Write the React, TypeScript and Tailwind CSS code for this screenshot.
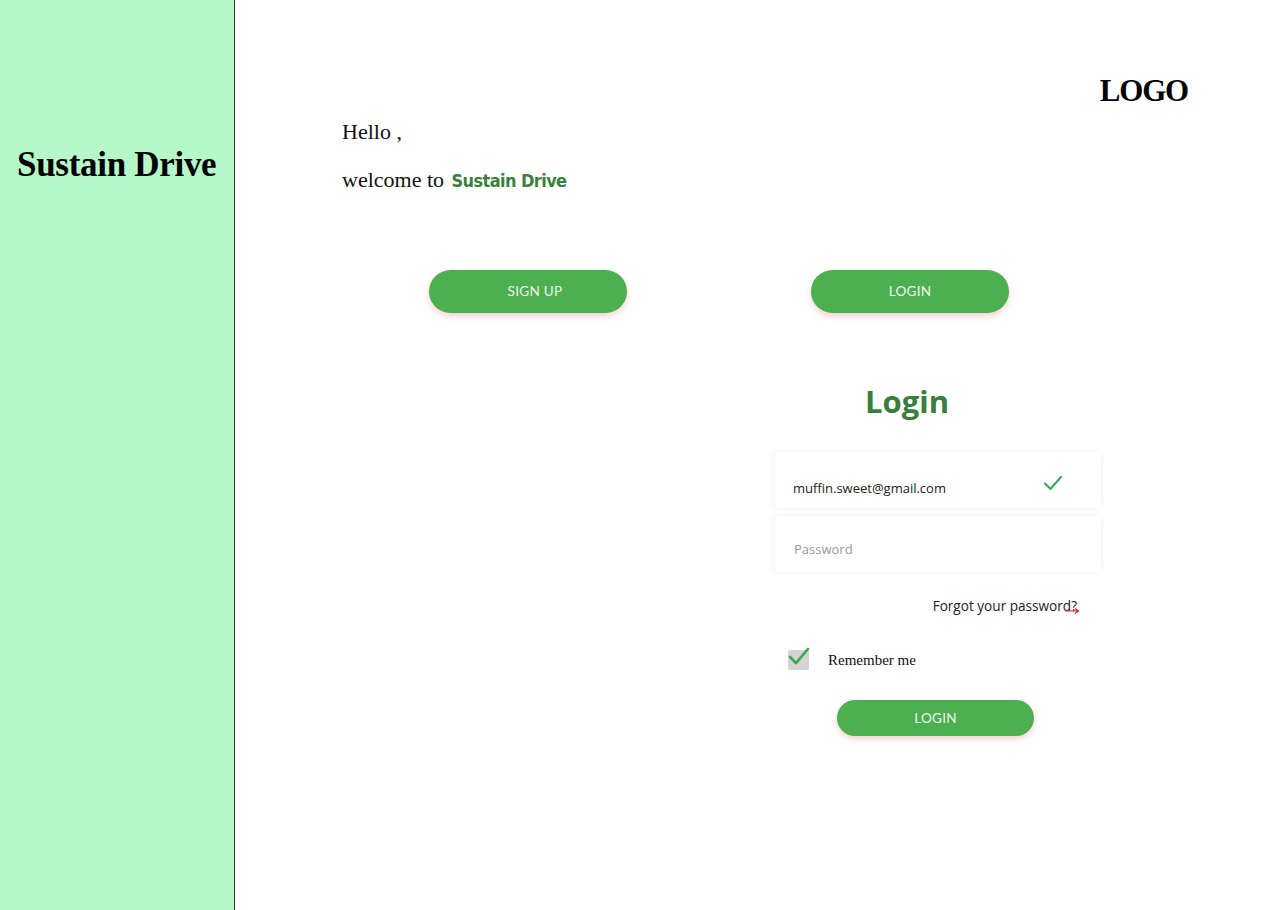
import React from "react";

const serif = { fontFamily: '"Liberation Serif", "DejaVu Serif", serif' };
const sans = { fontFamily: '"Lato", "Open Sans", "Noto Sans", sans-serif' };
const open = { fontFamily: '"Open Sans", "Lato", "Noto Sans", sans-serif' };

function PillButton({ label, className }: { label: string; className: string }) {
  return (
    <button
      className={`rounded-full bg-[#4caf50] text-white/90 text-[13.5px] tracking-[0.3px] shadow-[0_3px_6px_rgba(230,120,120,0.35)] ${className}`}
      style={sans}
    >
      {label}
    </button>
  );
}

export default function App() {
  return (
    <div className="flex w-[1280px] h-[910px] bg-white overflow-hidden">
      <aside className="w-[235px] shrink-0 bg-[#b6f8c8] border-r border-[#333] pt-[143px]">
        <h1 className="text-[35px] font-bold leading-[44px] text-black pl-[17px] tracking-[-0.3px]" style={serif}>
          Sustain Drive
        </h1>
      </aside>

      <main className="flex-1 flex flex-col">
        <div className="flex justify-end pr-[92px] pt-[71px]">
          <span className="text-[31px] font-bold leading-[40px] text-black tracking-[-1.2px]" style={serif}>
            LOGO
          </span>
        </div>

        <div className="pl-[107px] mt-[6px]">
          <p className="text-[22px] leading-[30px] text-[#111]" style={serif}>
            Hello ,
          </p>
          <p className="text-[22px] leading-[30px] text-[#111] mt-[18px]" style={serif}>
            welcome to{" "}
            <span
              className="text-[18px] font-bold text-[#3c7f3c] tracking-[-0.6px] ml-[2px]"
              style={{ fontFamily: '"DejaVu Sans Condensed", "DejaVu Sans", sans-serif' }}
            >
              Sustain Drive
            </span>
          </p>
        </div>

        <div className="flex pl-[194px] mt-[74px] gap-[184px]">
          <PillButton label="SIGN UP" className="w-[198px] h-[43px] pl-[14px]" />
          <PillButton label="LOGIN" className="w-[198px] h-[43px]" />
        </div>

        <div className="ml-[540px] w-[326px] flex flex-col mt-[68px]">
          <h2 className="text-[31px] font-bold leading-[40px] text-[#3a7d3c] text-center pr-[62px]" style={open}>
            Login
          </h2>

          <div className="mt-[31px] h-[56px] bg-white rounded-[3px] shadow-[0_0_6px_rgba(0,0,0,0.08)] flex items-center justify-between pl-[18px] pr-[38px]">
            <span className="text-[13px] text-[#222] mt-[18px]" style={open}>
              muffin.sweet@gmail.com
            </span>
            <svg width="20" height="16" viewBox="0 0 20 16" className="mt-[6px]">
              <path d="M2 8.5 L7.5 14 L18 2" fill="none" stroke="#3aa655" strokeWidth="2" strokeLinecap="round" />
            </svg>
          </div>

          <div className="mt-[8px] h-[56px] bg-white rounded-[3px] shadow-[0_0_6px_rgba(0,0,0,0.08)] flex items-center pl-[19px]">
            <span className="text-[13px] text-[#9a9a9a] mt-[12px]" style={open}>
              Password
            </span>
          </div>

          <div className="flex justify-end pr-[24px] mt-[24px]">
            <span className="relative text-[13.6px] text-[#222]" style={open}>
              Forgot your password?
              <svg width="14" height="6" viewBox="0 0 14 6" className="absolute right-[-3px] bottom-[2px]">
                <path d="M0 3 H12 M9 0.5 L12.5 3 L9 5.5" fill="none" stroke="#d22" strokeWidth="1.2" />
              </svg>
            </span>
          </div>

          <div className="flex items-center pl-[13px] mt-[31px]">
            <div className="relative w-[21px] h-[20px] bg-[#d4d4d4] rounded-[2px]">
              <svg width="24" height="22" viewBox="0 0 24 22" className="absolute left-[-1px] top-[-5px]">
                <path d="M3 12 L9 18 L21 4" fill="none" stroke="#3aa655" strokeWidth="2.6" strokeLinecap="round" />
              </svg>
            </div>
            <span className="ml-[19px] text-[15px] text-[#111] mt-[2px]" style={serif}>
              Remember me
            </span>
          </div>

          <PillButton label="LOGIN" className="ml-[62px] mt-[28px] w-[197px] h-[36px]" />
        </div>
      </main>
    </div>
  );
}
